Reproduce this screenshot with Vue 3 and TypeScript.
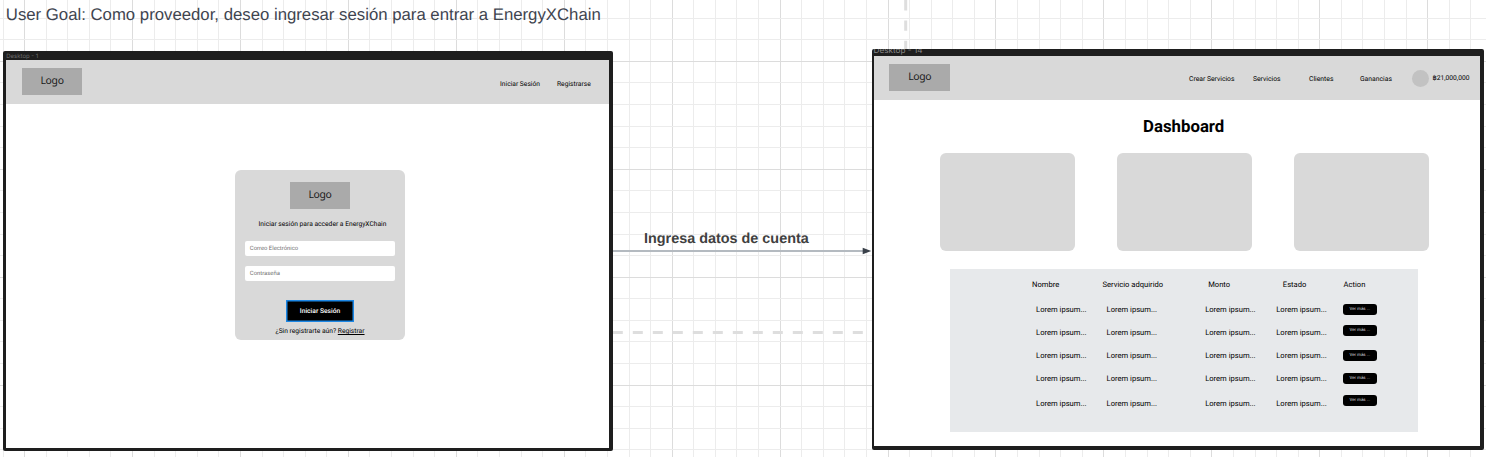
<script setup lang="ts">
interface Line { at: number; major: boolean }

const STEP = 21.586
const makeLines = (origin: number, from: number, to: number): Line[] => {
  const lines: Line[] = []
  for (let i = from; i <= to; i++) {
    lines.push({ at: Math.floor(origin + STEP * i), major: i % 5 === 0 })
  }
  return lines
}
const columns = makeLines(24.6, -1, 67)
const rows = makeLines(61.35, -2, 18)

const menu = ['Crear Servicios', 'Servicios', 'Clientes', 'Ganancias']
const placeholder = 'Lorem ipsum...'
const fields = [
  { key: 'nombre', title: 'Nombre' },
  { key: 'servicio', title: 'Servicio adquirido' },
  { key: 'monto', title: 'Monto' },
  { key: 'estado', title: 'Estado' },
]
</script>

<template>
  <main class="board">
    <svg class="grid" width="1486" height="457" shape-rendering="crispEdges">
      <rect v-for="c in columns" :key="'c' + c.at" :x="c.at" y="0" width="1" height="457" :class="{ major: c.major }" />
      <rect v-for="r in rows" :key="'r' + r.at" x="0" :y="r.at" width="1486" height="1" :class="{ major: r.major }" />
    </svg>
    <svg class="grid" width="1486" height="457">
      <path d="M612.8 332.4H873" stroke="#dedede" stroke-width="3" stroke-dasharray="10 10" />
      <path d="M905.7 0V50" stroke="#dedede" stroke-width="3" stroke-dasharray="10.4 10" />
      <path d="M613 251H864" stroke="#b4bac0" stroke-width="2" />
      <path d="M862.7 247.8L871.3 251L862.7 254.2Z" fill="#3a414a" />
    </svg>

    <h1 class="goal">User Goal: Como proveedor, deseo ingresar sesión para entrar a EnergyXChain</h1>
    <p class="flow-label">Ingresa datos de cuenta</p>

    <section class="frame login">
      <div class="frame-name">Desktop - 1</div>
      <div class="screen">
        <header class="bar">
          <div class="logo">Logo</div>
          <nav class="links"><a>Iniciar Sesión</a><a>Registrarse</a></nav>
        </header>
        <form class="card">
          <div class="logo">Logo</div>
          <p class="intro">Iniciar sesión para acceder a EnergyXChain</p>
          <div class="input">Correo Electrónico</div>
          <div class="input">Contraseña</div>
          <div class="submit">Iniciar Sesión</div>
          <p class="signup">¿Sin registrarte aún? <u>Registrar</u></p>
        </form>
      </div>
    </section>

    <section class="frame dash">
      <div class="frame-name">Desktop - 14</div>
      <div class="screen">
        <header class="bar">
          <div class="logo">Logo</div>
          <nav class="menu"><a v-for="m in menu" :key="m">{{ m }}</a></nav>
          <div class="avatar"></div>
          <span class="balance">฿21,000,000</span>
        </header>
        <h2 class="title">Dashboard</h2>
        <div class="tiles"><div v-for="n in 3" :key="n" class="tile"></div></div>
        <div class="table">
          <div v-for="f in fields" :key="f.key" class="col" :class="f.key">
            <div class="head">{{ f.title }}</div>
            <div v-for="n in 5" :key="n" class="cell">{{ placeholder }}</div>
          </div>
          <div class="col action">
            <div class="head">Action</div>
            <div v-for="n in 5" :key="n" class="more">Ver más ...</div>
          </div>
        </div>
      </div>
    </section>
  </main>
</template>

<style>
body { margin: 0; }
</style>

<style scoped>
* { box-sizing: border-box; }
.board {
  position: relative;
  width: 1486px;
  height: 457px;
  overflow: hidden;
  background: #fff;
  color: #000;
  font-family: Roboto, sans-serif;
  text-rendering: geometricPrecision;
  white-space: nowrap;
}
h1, h2, p { margin: 0; }
.grid { position: absolute; left: 0; top: 0; fill: #ececec; }
.grid .major { fill: #dcdcdc; }
.goal {
  position: absolute;
  left: 5.8px;
  top: 5px;
  font: 400 16.76px/20px "Liberation Sans", Arial, sans-serif;
  color: #3f4550;
}
.flow-label {
  position: absolute;
  left: 644px;
  top: 230px;
  font: 700 14.4px/18px "Liberation Sans", Arial, sans-serif;
  color: #404040;
}
.frame { position: absolute; background: #1e1e1e; overflow: hidden; }
.login { left: 3px; top: 50.5px; width: 610px; height: 400.5px; padding: 9.7px 4px 3px 3px; border-radius: 2px; }
.dash { left: 872px; top: 49px; width: 612px; height: 400.5px; padding: 7px 4.3px 3.3px 1.7px; border-radius: 2px; }
.frame-name { position: absolute; font-family: Inter, sans-serif; color: #6b6b6b; }
.login .frame-name { left: 3.2px; top: 2.5px; font-size: 6px; line-height: 8px; }
.dash .frame-name { left: 1.5px; top: -4px; font-size: 8.2px; line-height: 10px; color: #8a8a8a; }
.screen { height: 100%; background: #fff; }
.bar { display: flex; align-items: center; height: 44px; background: #d9d9d9; }
.logo {
  width: 60.5px;
  height: 27.3px;
  background: #aaa;
  font: 400 10.4px/26px "Noto Sans", sans-serif;
  letter-spacing: -.3px;
  color: #1a1a1a;
  text-align: center;
}
.bar .logo { margin: -1px 0 0 15.8px; }
.links { display: flex; gap: 17px; margin: 4px 18.3px 0 auto; font-size: 6.7px; }
.card {
  display: flex;
  flex-direction: column;
  align-items: center;
  width: 170px;
  height: 170px;
  margin: 66px 0 0 229px;
  padding-top: 11.7px;
  border-radius: 6px;
  background: #d9d9d9;
}
.intro { margin: 10px 0 0 5px; font-size: 6.7px; line-height: 10px; }
.input {
  width: 150px;
  height: 15px;
  margin-top: 12.2px;
  padding-left: 4.8px;
  border-radius: 2px;
  background: #fff;
  font-size: 5.9px;
  line-height: 17.6px;
  color: #707070;
}
.input + .input { margin-top: 10.1px; }
.submit {
  width: 68.5px;
  height: 22px;
  margin-top: 18.7px;
  border: 1px solid #1c87e5;
  box-shadow: inset 0 0 0 .5px #1c87e5;
  background: #000;
  color: #fff;
  font-size: 6.7px;
  font-weight: 500;
  line-height: 21.6px;
  text-align: center;
}
.signup { margin-top: 4px; font-size: 6.7px; line-height: 10px; }
.signup u { text-decoration-thickness: .5px; text-underline-offset: 1px; }
.menu { display: grid; grid-template-columns: 64px 56px 51px 52.5px; margin: 1px 0 0 239px; font-size: 6.8px; }
.avatar { width: 17px; height: 17px; border-radius: 50%; background: #c2c2c2; }
.balance { margin-left: 3px; font-size: 6.7px; }
.title { margin-top: 17px; padding-left: 14px; font-size: 16.8px; font-weight: 700; line-height: 20px; text-align: center; }
.dash .screen { display: flex; flex-direction: column; }
.dash .bar { flex: none; }
.tiles { display: flex; gap: 42px; margin: 16.4px 0 0 66px; }
.tile { width: 135.2px; height: 98px; border-radius: 6px; background: #d9d9d9; }
.table {
  display: flex;
  width: 468.3px;
  height: 163px;
  margin: 17.8px 0 0 76.3px;
  padding-left: 82.1px;
  background: #e7e9eb;
  font-size: 7.6px;
}
.head { height: 29.2px; padding-top: 10.7px; line-height: 10px; }
.cell { height: 23px; padding: 6.5px 0 0 4px; line-height: 10px; }
.cell:nth-child(3) { padding-top: 6.8px; }
.cell:nth-child(6) { padding-top: 8.3px; }
.nombre { width: 70.5px; }
.servicio { width: 105.6px; }
.monto { width: 74.7px; }
.monto .cell { margin-left: -7px; }
.estado { width: 60.7px; }
.estado .cell { margin-left: -10.6px; }
.more {
  width: 33.6px;
  height: 11px;
  margin-left: -.5px;
  border-radius: 3px;
  background: #000;
  color: #ddd;
  font-size: 4.4px;
  line-height: 12.4px;
  text-align: center;
}
.action .head { height: 35px; }
.more:nth-child(3) { margin-top: 10.2px; }
.more:nth-child(4) { margin-top: 13.6px; }
.more:nth-child(5) { margin-top: 12.4px; }
.more:nth-child(6) { margin-top: 10.5px; }
</style>
